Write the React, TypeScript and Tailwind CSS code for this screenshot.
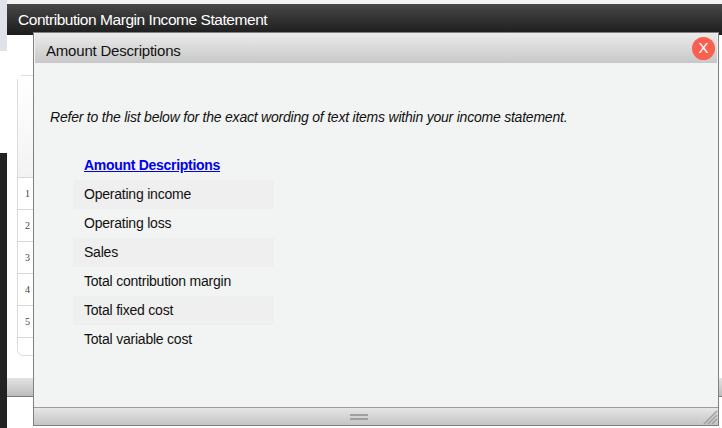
const FONT = "font-['Liberation_Sans',Arial,sans-serif]"

const terms = [
  'Operating income',
  'Operating loss',
  'Sales',
  'Total contribution margin',
  'Total fixed cost',
  'Total variable cost',
]

function GripLines() {
  return (
    <div className="flex flex-col gap-[2px]">
      <div className="h-[2px] w-[18px] bg-[#a0a0a0]" />
      <div className="h-[2px] w-[18px] bg-[#a0a0a0]" />
    </div>
  )
}

function ResizeCorner() {
  return (
    <svg className="absolute right-0 bottom-0" width="16" height="16" viewBox="0 0 16 16">
      <path d="M2 15 L15 2 M6 15 L15 6 M10 15 L15 10" stroke="#a0a0a0" strokeWidth="1.5" fill="none" />
    </svg>
  )
}

function Modal() {
  return (
    <div className="absolute left-[33px] top-[32px] flex h-[394px] w-[686px] flex-col border border-[#808080] bg-[#f2f4f3]">
      {/* Title bar */}
      <div className="ml-[1px] mr-[1px] flex h-[30px] shrink-0 items-center justify-between bg-gradient-to-b from-[#ebebeb] to-[#c8c8c8] pl-[11px] pr-[2px]">
        <span className="pt-[7px] text-[15px] tracking-[-0.2px] text-[#111]">Amount Descriptions</span>
        <button className="flex h-[23px] w-[23px] items-center justify-center rounded-full bg-[#f9604f] text-[15px] text-white">
          X
        </button>
      </div>

      {/* Body */}
      <div className="flex-1 pl-[16px] pt-[45px]">
        <p className="text-[14px] leading-[18px] tracking-[-0.22px] text-[#111] italic">
          Refer to the list below for the exact wording of text items within your income statement.
        </p>
        <div className="ml-[23px] mt-[25px] w-[201px]">
          <div className="h-[29px] pl-[11px] text-[14px] font-bold leading-[29px] tracking-[-0.29px] text-[#0000ee] underline">
            Amount Descriptions
          </div>
          {terms.map((term, i) => (
            <div
              key={term}
              className={`h-[29px] pl-[11px] text-[14px] leading-[29px] tracking-[-0.22px] text-[#111] ${i % 2 === 0 ? 'bg-[#efefef]' : ''}`}
            >
              {term}
            </div>
          ))}
        </div>
      </div>

      {/* Footer */}
      <div className="relative flex h-[18px] shrink-0 items-center justify-center border-t border-[#9c9c9c] bg-gradient-to-b from-[#e6e6e6] to-[#c4c4c4] pr-[34px]">
        <GripLines />
        <ResizeCorner />
      </div>
    </div>
  )
}

export default function App() {
  return (
    <div className={`relative flex h-[428px] w-[722px] overflow-hidden bg-white ${FONT}`}>
      {/* Left strip */}
      <div className="flex w-[7px] shrink-0 flex-col">
        <div className="h-[51px] bg-[#dfe3e9]" />
        <div className="h-[102px] bg-white" />
        <div className="flex-1 bg-[#222]" />
      </div>

      {/* Page behind the modal */}
      <div className="flex min-w-0 flex-1 flex-col">
        <div className="h-[4px] bg-[#f1f3f2]" />
        <div className="flex h-[31px] items-center bg-gradient-to-b from-[#484848] to-[#1c1c1c] pl-[11px] text-[15.5px] tracking-[-0.45px] text-white">
          Contribution Margin Income Statement
        </div>
        <div className="ml-[10px] mt-[40px] h-[281px] w-[200px] rounded-[6px] border border-[#dcdcdc] bg-white">
          <div className="h-[101px] bg-gradient-to-b from-white to-[#f3f3f3]" />
          {[1, 2, 3, 4, 5].map((n) => (
            <div
              key={n}
              className="flex h-[32px] items-center border-t border-[#d8d8d8] pl-[7px] font-['Liberation_Serif',serif] text-[10px] text-[#444]"
            >
              {n}
            </div>
          ))}
          <div className="border-t border-[#d8d8d8]" />
        </div>
        <div className="mt-[22px] h-[19px] border-b border-[#777] bg-gradient-to-b from-[#e4e4e4] to-[#bdbdbd]" />
      </div>

      <Modal />
    </div>
  )
}
